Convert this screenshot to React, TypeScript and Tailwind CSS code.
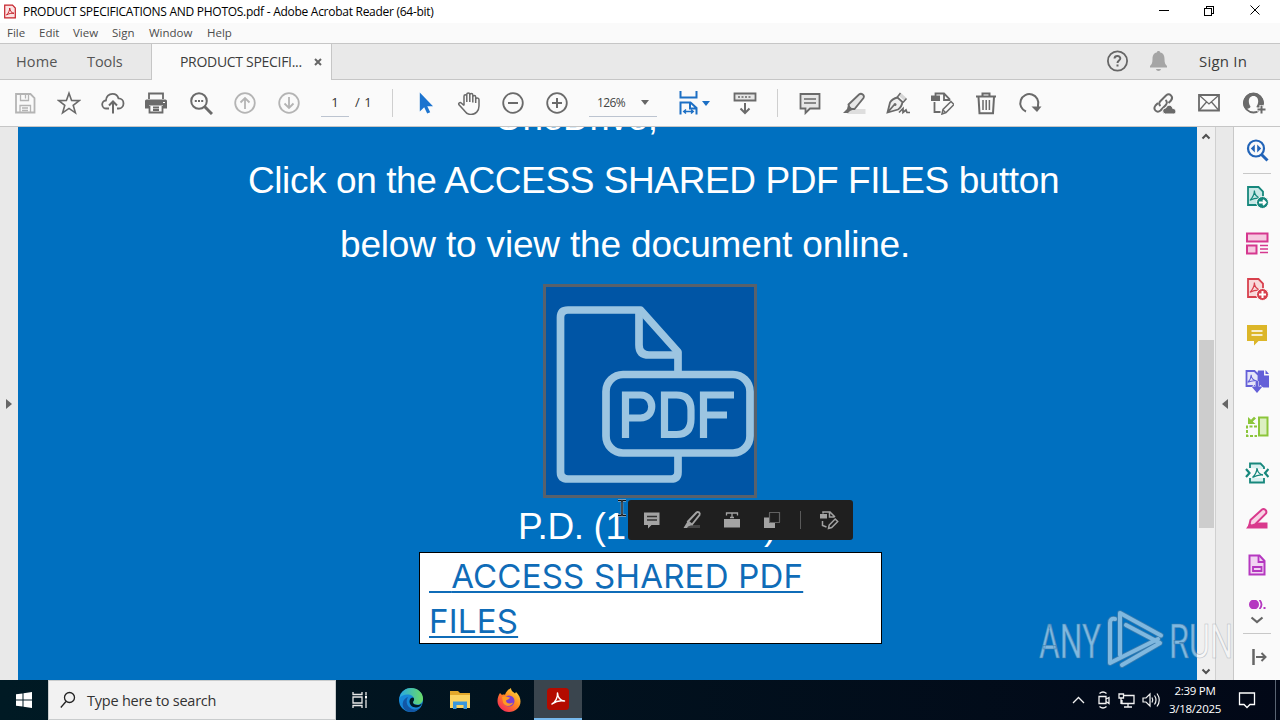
import type { ReactNode } from "react";
import clsx from "clsx";

type IconProps = {
  children: ReactNode;
  className?: string;
};

function Icon({ children, className }: IconProps) {
  return (
    <svg
      viewBox="0 0 24 24"
      fill="none"
      stroke="currentColor"
      strokeWidth="1.8"
      className={clsx("h-6 w-6 shrink-0", className)}
    >
      {children}
    </svg>
  );
}

function Cell({ children, className }: IconProps) {
  return (
    <div className={clsx("flex h-full shrink-0 items-center justify-center", className)}>
      {children}
    </div>
  );
}

const menuItems = [
  { label: "File", width: "w-8" },
  { label: "Edit", width: "w-[34px]" },
  { label: "View", width: "w-[39px]" },
  { label: "Sign", width: "w-[37px]" },
  { label: "Window", width: "w-[58px]" },
  { label: "Help", width: "w-10" },
];

const fileTools = [
  {
    name: "save",
    color: "text-[#b4b4b4]",
    icon: (
      <>
        <path d="M3 3h14.500L21.500 7v14.500H3z" />
        <path d="M7.500 3v6.500h8V3M12.500 4v3.500M7 21.500v-7h10.500v7M9 17h6M9 19.500h6" strokeWidth="1.300" />
      </>
    ),
  },
  {
    name: "star",
    color: "text-[#6a6a6a]",
    icon: <path d="M12 2.200l2.600 7.200 7.700.2-6.100 4.700 2.200 7.500-6.400-4.400-6.400 4.400 2.200-7.500L1.700 9.600l7.700-.2z" strokeWidth="1.600" />,
  },
  {
    name: "upload",
    color: "text-[#6a6a6a]",
    icon: (
      <>
        <path d="M8 17.500H5.500a4 4 0 0 1-.6-8C5 5.500 8 2.800 11.500 2.800c3.200 0 5.300 1.900 6 4.600 3 .1 5 2.400 5 5s-2 5-4.800 5.100H16" />
        <path d="M12 22.500V11M8 14.500l4-4 4 4" strokeWidth="2" />
      </>
    ),
  },
  {
    name: "print",
    color: "text-[#6a6a6a]",
    icon: (
      <>
        <path d="M1.500 8.500h19a1.500 1.500 0 0 1 1.500 1.500v7.500h-4v-3H4v3H0V10a1.500 1.500 0 0 1 1.500-1.500z" fill="currentColor" stroke="none" />
        <path d="M4 8V2.500h14V8M4.500 15v6.500h13V15M8 16.500h6M8 19h6" />
        <path d="M18 11.500h2" stroke="#fff" strokeWidth="1" />
      </>
    ),
  },
  {
    name: "find",
    color: "text-[#6a6a6a]",
    icon: (
      <>
        <circle cx="10" cy="10" r="7.800" strokeWidth="2" />
        <path d="M15.500 15.500l7.500 7.500" strokeWidth="3" />
        <path d="M5.800 10h2M9 10h2M12.200 10h2" strokeWidth="2" />
      </>
    ),
  },
  {
    name: "previous",
    color: "text-[#b4b4b4]",
    icon: (
      <>
        <circle cx="12" cy="12" r="9.800" />
        <path d="M12 18V7M7.500 11.500L12 7l4.500 4.500" />
      </>
    ),
  },
  {
    name: "next",
    color: "text-[#b4b4b4]",
    icon: (
      <>
        <circle cx="12" cy="12" r="9.800" />
        <path d="M12 6v11M7.500 12.500L12 17l4.500-4.500" />
      </>
    ),
  },
];

const viewTools = [
  {
    name: "select",
    color: "text-[#1c74cf]",
    icon: <path d="M6.800 1.500v19l4.400-4.200 3 6.200 3-1.300-2.900-6h5.700z" fill="currentColor" stroke="none" />,
  },
  {
    name: "hand",
    color: "text-[#6a6a6a]",
    icon: (
      <path
        d="M7 14.500V5.200c0-1.900 2.800-1.900 2.800 0V11M9.800 5V3.400c0-1.900 3-1.900 3 0V11M12.800 4c0-1.900 3-1.900 3 0v7.500M15.800 6c0-1.900 2.900-1.900 2.900 0v6M18.700 8.500c0-2 3.300-2 3.300.2V15c0 5-3.500 8.500-8 8.500-4 0-5.500-2-7.200-4.500L2 13.800c-1-1.800 1-3 2.500-1.600L7 14.500"
        strokeWidth="1.500"
      />
    ),
  },
  {
    name: "zoom out",
    color: "text-[#6a6a6a]",
    icon: (
      <>
        <circle cx="12" cy="12" r="9.800" />
        <path d="M7 12h10" strokeWidth="2" />
      </>
    ),
  },
  {
    name: "zoom in",
    color: "text-[#6a6a6a]",
    icon: (
      <>
        <circle cx="12" cy="12" r="9.800" />
        <path d="M7 12h10M12 7v10" strokeWidth="2" />
      </>
    ),
  },
];

const editTools = [
  {
    name: "comment",
    icon: (
      <>
        <path d="M2.500 3h19v14.500H12L7.500 22v-4.500h-5z" fill="#e6e6e6" />
        <path d="M6 8h12M6 12h12" strokeWidth="1.400" />
      </>
    ),
  },
  {
    name: "highlight",
    icon: (
      <>
        <path d="M8 18h15.500v5H5z" fill="#dedede" stroke="none" />
        <path d="M6.500 13.500L17 3.500c2.500-2 6 .8 4.500 3.500L12.500 18H8z" fill="#e6e6e6" />
        <path d="M6 14l5.500 4.500L8 20l-2 2H1l4-4z" fill="currentColor" stroke="none" />
      </>
    ),
  },
  {
    name: "sign",
    icon: (
      <>
        <path d="M12.500 4.500L15 2l5.500 5-2.500 2.500z" fill="#d6d6d6" stroke="none" />
        <path d="M1.500 21.500L4 11.500c2-3.500 5-4.500 7.500-5L16.500 11c-.5 3-1.500 5.500-4.500 7.500zM2 21l6-7" fill="#eee" />
        <path d="M11 6.500L14.500 2M17 11.500l3.500-4" strokeWidth="1.500" />
        <path d="M13 21.500l4-4v4l3-2.500 1 2.500H24" strokeWidth="1.700" />
        <circle cx="9" cy="13.500" r="1.500" fill="currentColor" stroke="none" />
      </>
    ),
  },
  {
    name: "fill",
    icon: (
      <>
        <path d="M5.500 5V2.500h8.500l5.500 5.500v2M14 3v6h5.500M4.500 11v10h6" />
        <path d="M1 4.500h9v5.500H1z" fill="currentColor" stroke="none" />
        <path d="M12 23l1-4.500 8-8 3 3-8 8z" fill="#fafafa" strokeWidth="1.500" />
        <path d="M13 19l2.800 2.800" strokeWidth="1.300" />
      </>
    ),
  },
  {
    name: "delete",
    icon: (
      <>
        <path d="M2 5.500h20M8.500 5V2.500h7V5M4.500 6l1 16.300h13.500l1-16.300" strokeWidth="2" />
        <path d="M9 9v10M12.200 9v10M15.400 9v10" strokeWidth="1.500" />
      </>
    ),
  },
  {
    name: "rotate",
    icon: (
      <>
        <path d="M8 20.500A9 9 0 1 1 20 14.500v2" strokeWidth="2" />
        <path d="M13.500 15.500H23.500L19 21z" fill="currentColor" stroke="none" />
      </>
    ),
  },
];

const shareTools = [
  {
    name: "link",
    icon: (
      <>
        <path d="M8.500 15c-2-1.500-1.500-3.500 0-5L14 4.500c3.500-3 8 1 5 5L16.500 12" strokeWidth="2" />
        <path d="M13.500 9c2 1.500 1.500 3.500.3 5L8.500 19.500c-3.500 3-8-1-5-5L6 12" strokeWidth="2" />
        <path d="M13.500 23a3 3 0 0 1 .3-6c1-3.500 6-4 7 .5 4 0 4 5.500.7 5.500z" fill="currentColor" stroke="#fafafa" strokeWidth="1" />
      </>
    ),
  },
  {
    name: "mail",
    icon: (
      <>
        <path d="M2 4h20v15.500H2z" />
        <path d="M2.500 4.500L12 13l9.500-8.500M2.500 19l7-8M21.500 19l-7-8" strokeWidth="1.300" />
      </>
    ),
  },
  {
    name: "account",
    icon: (
      <>
        <circle cx="11.500" cy="12" r="9.500" strokeWidth="1.800" />
        <path d="M3.500 18.500c3-1 5-1.200 5-3C5.500 11 6.500 5 11.500 5s6 6 3 10.500c0 1.200 1.200 1.500 2.500 2l5-4.500C22 7 17.500 2 11.500 2a10 10 0 0 0-8 16.500z" fill="currentColor" stroke="none" />
        <path d="M19.500 14v9M15 18.500h9" stroke="#fafafa" strokeWidth="4" />
        <path d="M19.500 14.500v8M15.500 18.500h8" strokeWidth="2" />
      </>
    ),
  },
];

const acrobatMark = "M6 17c3-3 5-7 5-11 0 5 3 8 8 9-5-1-9 0-13 2z";

const sideTools = [
  {
    name: "export",
    color: "text-[#16877c]",
    icon: (
      <>
        <path d="M3 2h10.500L18 6.500V20H3z" fill="#c9e8e6" />
        <path d={acrobatMark} strokeWidth="1.300" transform="translate(-.5 0) scale(.9)" />
        <circle cx="17.500" cy="17.500" r="6" fill="currentColor" stroke="#fafafa" strokeWidth="1" />
        <path d="M14 17.500h6.500M18 15l2.500 2.500L18 20" stroke="#fff" />
      </>
    ),
  },
  {
    name: "organize",
    color: "text-[#d5388f]",
    icon: (
      <>
        <path d="M2 2.500h20.500v8H2zM2 14.500h9.500v8H2z" fill="#f6c9e0" strokeWidth="2" />
        <path d="M15 14.500h8M15 18h8M15 21.500h8" strokeWidth="1.300" />
      </>
    ),
  },
  {
    name: "create",
    color: "text-[#d8404d]",
    icon: (
      <>
        <path d="M3 2h10.500L18 6.500V20H3z" fill="#f8d9da" />
        <path d={acrobatMark} strokeWidth="1.300" transform="translate(-.5 0) scale(.9)" />
        <circle cx="17.500" cy="17.500" r="6" fill="currentColor" stroke="#fafafa" strokeWidth="1" />
        <path d="M14 17.500h7M17.500 14v7" stroke="#fff" strokeWidth="2" />
      </>
    ),
  },
  {
    name: "note",
    color: "text-[#dcb628]",
    icon: (
      <>
        <path d="M2 2h20v16h-8.500L9 22.500V18H2z" fill="currentColor" stroke="none" />
        <path d="M6.500 8h11M6.500 12h11" stroke="#fff" strokeWidth="1.600" />
      </>
    ),
  },
  {
    name: "combine",
    color: "text-[#6460d8]",
    icon: (
      <>
        <path d="M13 1.500h6v5h5v12H12v-13z" fill="currentColor" stroke="none" />
        <path d="M20.500 1L24 5h-3.500z" fill="currentColor" stroke="none" />
        <path d="M1.500 2h8l4 4v11h-12z" fill="#e6e5f8" />
        <path d={acrobatMark} strokeWidth="1.500" transform="translate(-1.500 1.500) scale(.7)" />
        <path d="M12 12v9M7 17.500l5 5 5-5" stroke="#fafafa" strokeWidth="4" />
        <path d="M12 12v8" strokeWidth="3" />
        <path d="M6.500 17.500h11L12 24z" fill="currentColor" stroke="none" />
      </>
    ),
  },
  {
    name: "compare",
    color: "text-[#8bc53a]",
    icon: (
      <>
        <path d="M14 2.500h8.500v18H14z" fill="#dcefc2" strokeWidth="2" />
        <path d="M12 11.500H2v9.500h10" strokeDasharray="3 1.500" strokeWidth="2" />
        <path d="M3 2v7h7.500L7.800 6.500 11 3.500 9 1.800 6 4.800z" fill="currentColor" stroke="none" />
      </>
    ),
  },
  {
    name: "compress",
    color: "text-[#16877c]",
    icon: (
      <>
        <path d="M5 7V2.500h10.500L19 6v2M5 17v4.500h14V17" fill="#d9f1f0" />
        <path d="M1 8l3.500 4L1 16M23.500 8L20 12l3.500 4" strokeWidth="2.200" />
        <path d="M7.500 16.500c3-3 4.500-6 4.500-9.500.5 4 2.500 6.500 6 7-4-.5-7 .5-10.500 2.500z" strokeWidth="1.300" />
      </>
    ),
  },
  {
    name: "redact",
    color: "text-[#d93a8d]",
    icon: (
      <>
        <path d="M1 21.500l4-5 3.500 1 3.500-2h10.500v6z" fill="currentColor" stroke="none" />
        <path d="M5.500 13L17 2.500c2-1.500 5.500 1 4 4L10 17.500 4 19.500z" fill="#f8d4e6" strokeWidth="2" />
        <path d="M2 21h4.500l1-2.500-3-2.500z" fill="currentColor" stroke="none" />
      </>
    ),
  },
  {
    name: "prepare",
    color: "text-[#b538c0]",
    icon: (
      <>
        <path d="M4.500 2.500h10l5 5.500v13.500h-15z" fill="#f1d4f2" strokeWidth="2" />
        <path d="M13.500 3v6H19M8 14h8.500v4H8z" />
      </>
    ),
  },
];

const popupTools = [
  {
    name: "comment",
    icon: (
      <>
        <path d="M4 4.500h15.500V17h-8L8 20.500V17H4z" fill="currentColor" stroke="none" />
        <path d="M7 8.500h10M7 12h10" stroke="#333" strokeWidth="1.500" />
      </>
    ),
  },
  {
    name: "highlight",
    icon: (
      <>
        <path d="M8 17h12v3H5z" fill="#444" stroke="none" />
        <path d="M8 13.500l8.500-9c1.500-1.500 4 .3 3 2.500L12 16.500z" strokeWidth="1.900" />
        <path d="M7.500 13.500l4.500 3.500-4 1.500-1 1.500H3.500z" fill="currentColor" stroke="none" />
      </>
    ),
  },
  {
    name: "text",
    icon: (
      <>
        <path d="M4 11h16v8.500H4z" fill="currentColor" stroke="none" />
        <path d="M6.500 7.500V5h11v2.500M12 5v5M10 9.500h4" strokeWidth="1.300" />
      </>
    ),
  },
  {
    name: "snapshot",
    icon: (
      <>
        <path d="M4 9.500h5V15h6v5H4z" fill="currentColor" stroke="none" />
        <path d="M9.500 4.500h10v10h-10z" strokeWidth="1.200" strokeDasharray="1 1" />
      </>
    ),
  },
];

function TitleBar() {
  return (
    <header className="flex h-[23px] items-center bg-white pl-1 text-black">
      <svg viewBox="0 0 12 14" className="h-[15px] w-3" fill="none">
        <path d="M.7.700h7.800l2.800 2.800v9.800H.7z" fill="#fbe3e3" stroke="#c5222b" strokeWidth="1.200" />
        <path d="M2.500 10.500C4.500 8.500 5.700 6 5.700 3.500c.3 3 1.800 5 4.300 5.300-2.700-.3-5 .2-7.500 1.700z" stroke="#c5222b" />
      </svg>
      <h1 className="ml-[7px] text-[12px] leading-none tracking-[-0.275px] whitespace-nowrap">
        PRODUCT SPECIFICATIONS AND PHOTOS.pdf - Adobe Acrobat Reader (64-bit)
      </h1>
      <svg viewBox="0 0 112 12" className="mr-[14px] mb-0.5 ml-auto h-3 w-28" fill="none" stroke="#000" shapeRendering="crispEdges">
        <path d="M5 5.500h10M50.500 3.500h7v7h-7zM52.500 3V1.500h7v7H58" />
        <path d="M96.500.500l9 9M105.500.500l-9 9" shapeRendering="auto" />
      </svg>
    </header>
  );
}

function TabBar() {
  return (
    <nav className="flex h-[37px] items-stretch border-y border-[#c6c6c6] bg-[#e9e9e9] text-[14.500px] text-[#555]">
      <div className="flex w-[87px] items-center pl-4 tracking-[0.150px]">Home</div>
      <div className="flex w-16 items-center tracking-[-0.100px]">Tools</div>
      <div className="-mb-px flex w-[181px] items-center border-x border-[#c6c6c6] bg-[#fafafa] pb-px pl-7 text-[14px] text-[#3c3c3c]">
        <span className="w-[134px] tracking-[-0.300px] whitespace-nowrap">PRODUCT SPECIFI...</span>
        <svg viewBox="0 0 8 8" className="h-2 w-2" stroke="#666" strokeWidth="2">
          <path d="M1 1l6 6M7 1L1 7" />
        </svg>
      </div>
      <div className="ml-auto flex items-center pb-px">
        <Icon className="text-[#666]">
          <circle cx="11.500" cy="12" r="9.600" />
          <path d="M8.500 9.500c.3-3.500 6-3 5.800 0-.1 2-2.800 2-2.800 4.500M11.500 15.500v2" strokeWidth="2" />
        </Icon>
        <Icon className="ml-[17px] text-[#a5a5a5]">
          <path d="M11.500 2c1 0 1.700.6 1.700 1.600 3.300.7 4.300 3.400 4.300 6.400 0 4 .8 5.500 2.500 7v1.500H3V17c1.700-1.500 2.500-3 2.500-7 0-3 1-5.700 4.300-6.400C9.800 2.600 10.500 2 11.500 2zM9 20h5c-.3 2.500-4.700 2.500-5 0z" fill="currentColor" stroke="none" />
        </Icon>
        <span className="ml-7 w-[81px] text-[15px] tracking-[0.200px] text-[#3c3c3c]">Sign In</span>
      </div>
    </nav>
  );
}

function Toolbar() {
  return (
    <div className="flex h-[47px] items-center border-b border-[#c6c6c6] bg-[#fafafa] pl-[3px] text-[#6a6a6a]">
      {fileTools.map((tool) => (
        <Cell key={tool.name} className={clsx("w-11", tool.color)}>
          <Icon>{tool.icon}</Icon>
        </Cell>
      ))}
      <div className="ml-[10px] flex h-[27px] w-7 items-center justify-center border-b border-[#bcc4d0] text-[13px] text-[#333]">1</div>
      <span className="ml-[6px] w-[37px] text-[13px] tracking-[0.500px] text-[#333]">/ 1</span>
      <div className="mr-[10px] h-7 w-px bg-[#cfcfcf]" />
      {viewTools.map((tool) => (
        <Cell key={tool.name} className={clsx("w-11", tool.color)}>
          <Icon>{tool.icon}</Icon>
        </Cell>
      ))}
      <div className="mr-[10px] ml-[10px] flex h-[27px] w-[68px] items-center justify-between border-b border-[#bcc4d0] pr-2 pl-2 text-[12px] text-[#444]">
        <span className="tracking-[-0.600px]">126%</span>
        <svg viewBox="0 0 8 5" className="h-[5px] w-2" fill="#666">
          <path d="M0 0h8L4 5z" />
        </svg>
      </div>
      <div className="flex h-full w-14 items-center pl-[10px] text-[#1c6fc4]">
        <Icon>
          <path d="M3.500 0v6.500h16V0M3.500 23.500V11.500h10l6 5.500v6.500M13 12v5.500h6" strokeWidth="2" />
          <path d="M7 20.500h9M9 18.500l-2.300 2L9 22.500M14 18.500l2.300 2-2.300 2" strokeWidth="1.400" />
        </Icon>
        <svg viewBox="0 0 8 5" className="ml-px h-[5px] w-2 shrink-0" fill="currentColor">
          <path d="M0 0h8L4 5z" />
        </svg>
      </div>
      <Cell className="w-11">
        <Icon>
          <path d="M1.500 2.500h21v7h-21z" fill="#e6e6e6" />
          <path d="M5 6h14" strokeDasharray="2 1.500" strokeWidth="1.600" />
          <path d="M12 12v10M7.500 17.500L12 22l4.500-4.500" strokeWidth="2" />
        </Icon>
      </Cell>
      <div className="mx-[10px] h-7 w-px bg-[#cfcfcf]" />
      {editTools.map((tool) => (
        <Cell key={tool.name} className="w-11">
          <Icon>{tool.icon}</Icon>
        </Cell>
      ))}
      <div className="mr-1 ml-auto flex h-full">
        {shareTools.map((tool) => (
          <Cell key={tool.name} className="w-[45px]">
            <Icon>{tool.icon}</Icon>
          </Cell>
        ))}
      </div>
    </div>
  );
}

function PdfPicture() {
  return (
    <svg viewBox="0 0 208 208" className="h-full w-full" fill="none" stroke="#9cc5e1" strokeWidth="7.700">
      <path d="M132 84V65L94.500 23H22q-7.500 0-7.500 7.500V185q0 7 7.500 7h103q7 0 7-7v-19" strokeLinejoin="round" />
      <path d="M93 23v35q0 10 10 10h29" />
      <rect x="60" y="87.500" width="144" height="78.500" rx="17" />
      <path d="M79.500 151v-43h15c15 0 15 23 0 23h-15M118.500 108h12q14.500 0 14.500 15v9q0 15.500-14.500 15.500h-12zM157.500 151v-43H188M157.500 128h23.500" strokeWidth="7.200" />
    </svg>
  );
}

function SelectionPopup() {
  return (
    <div className="absolute top-[373px] left-[610px] flex h-10 w-[225px] items-center rounded-[3px] bg-[#1f1f1f] pl-1 text-[#a3a3a3]">
      {popupTools.map((tool) => (
        <div key={tool.name} className="flex w-10 justify-center">
          <Icon>{tool.icon}</Icon>
        </div>
      ))}
      <div className="ml-2 h-[18px] w-px bg-[#5a5a5a]" />
      <Icon className="ml-4">
        <path d="M6 5.500V4h7l5 5M12.500 4v5h5M5.500 13v4.500l4 1.500" strokeWidth="1.500" />
        <path d="M3 6h7v4.500H3z" fill="currentColor" stroke="none" />
        <path d="M11.500 20.500l.7-3.500 6-6 2.500 2.500-6 6z" strokeWidth="1.500" />
      </Icon>
    </div>
  );
}

function Document() {
  return (
    <main className="relative w-[1179px] overflow-hidden bg-[#0070c0] text-white">
      <div className="-mt-[41px] font-['Liberation_Sans'] text-[37px] whitespace-nowrap">
        <p className="pl-[476px] leading-[63px] tracking-[-0.300px]">OneDrive,</p>
        <p className="pl-[230px] leading-[64px] tracking-[-0.410px]">Click on the ACCESS SHARED PDF FILES button</p>
        <p className="pl-[322px] leading-[64px] tracking-[-0.170px]">below to view the document online.</p>
      </div>
      <div className="mt-[7px] ml-[525px] h-[214px] w-[214px] border-[3px] border-[#59616b] bg-[#0055a5]">
        <PdfPicture />
      </div>
      <div className="flex h-[54px] items-center pt-0.5 pl-[500px] font-['Liberation_Sans'] text-[37px] leading-none whitespace-nowrap">
        <span className="w-[246px] tracking-[-0.400px]">P.D. (1</span>
        <span>)</span>
      </div>
      <div className="ml-[401px] h-[92px] w-[463px] border border-black bg-white pt-px pl-[9px] font-['Inter'] text-[33px] leading-[45px] text-[#0f6cb8]">
        <p className="tracking-[0.220px] whitespace-pre underline decoration-2 underline-offset-[3px]">
          <span className="tracking-[-1.900px]">{"   "}</span>
          ACCESS SHARED PDF
        </p>
        <p className="tracking-[0.220px] underline decoration-2 underline-offset-[3px]">FILES</p>
      </div>
      <SelectionPopup />
      <svg viewBox="0 0 10 18" className="absolute top-[372px] left-[599px] h-[18px] w-[10px]" fill="none">
        <path d="M1 1.500h3l1 1 1-1h3M5 2v14M1 16.500h3l1-1 1 1h3" stroke="#9ab" strokeWidth="2.500" />
        <path d="M1 1.500h3l1 1 1-1h3M5 2v14M1 16.500h3l1-1 1 1h3" stroke="#111" strokeWidth="1.200" />
      </svg>
    </main>
  );
}

function ScrollBar() {
  return (
    <div className="flex w-[19px] flex-col items-center border-r border-[#d0d0d0] bg-[#f0f0f0]">
      <svg viewBox="0 0 10 18" className="h-[18px] w-[10px]" fill="none" stroke="#505050" strokeWidth="2">
        <path d="M1.500 11.500L5 8l3.500 3.500" />
      </svg>
      <div className="mt-[195px] h-[188px] w-[15px] bg-[#cdcdcd]" />
      <svg viewBox="0 0 10 18" className="mt-auto h-[18px] w-[10px]" fill="none" stroke="#505050" strokeWidth="2">
        <path d="M1.500 7.500L5 11l3.500-3.500" />
      </svg>
    </div>
  );
}

function SidePanel() {
  return (
    <aside className="flex w-[46px] flex-col items-center bg-[#fafafa]">
      <div className="flex h-[46px] items-center text-[#2264b8]">
        <Icon>
          <circle cx="11" cy="10.500" r="8" strokeWidth="2.200" />
          <path d="M16.500 16.500l6 6" strokeWidth="3" />
          <path d="M9.800 6.500v8l-4-4zM12.200 6.500v8l4-4z" fill="currentColor" stroke="none" />
        </Icon>
      </div>
      <div className="h-px w-7 bg-[#c8c8c8]" />
      {sideTools.map((tool) => (
        <div key={tool.name} className={clsx("flex h-[46px] items-center", tool.color)}>
          <Icon>{tool.icon}</Icon>
        </div>
      ))}
      <div className="mt-3 h-[9px] overflow-hidden text-[#b538c0]">
        <svg viewBox="0 0 20 9" className="h-[9px] w-5" fill="none" stroke="currentColor" strokeWidth="1.800">
          <circle cx="7" cy="4.500" r="5" fill="currentColor" stroke="none" />
          <path d="M12.500 0q4 4.500 0 9M16.500 8h2" />
        </svg>
      </div>
      <svg viewBox="0 0 14 8" className="mt-[7px] h-2 w-[14px]" fill="none" stroke="#666" strokeWidth="2.200">
        <path d="M1.500 1.500L7 6l5.500-4.500" />
      </svg>
      <div className="mt-[9px] h-px w-7 bg-[#c8c8c8]" />
      <Icon className="mt-[11px] ml-[3px] text-[#666]">
        <path d="M6.500 4v16" strokeWidth="2.500" />
        <path d="M9 12h9M14.500 8l4 4-4 4" strokeWidth="2" />
      </Icon>
    </aside>
  );
}

function Watermark() {
  return (
    <svg viewBox="0 0 200 64" className="absolute top-[608px] left-[1036px] h-16 w-[200px]" opacity="0.500">
      <g fill="#fff" stroke="#7d8c9a" strokeWidth=".7" fontFamily="Roboto" fontSize="48">
        <text x="3" y="50" textLength="62" lengthAdjust="spacingAndGlyphs">ANY</text>
        <text x="133" y="50" textLength="64" lengthAdjust="spacingAndGlyphs">RUN</text>
      </g>
      <g fill="none" strokeLinejoin="round" strokeLinecap="round">
        <path d="M79 11q-5-1-5 4v40l48-24M84 47V5l41 22.500M90 17l34 18-38 22" stroke="#75899c" strokeWidth="5.500" />
        <path d="M79 11q-5-1-5 4v40l48-24M84 47V5l41 22.500M90 17l34 18-38 22" stroke="#fff" strokeWidth="4" />
      </g>
    </svg>
  );
}

function Taskbar() {
  return (
    <footer className="flex h-10 items-stretch bg-linear-to-r from-[#001a24] to-[#020817] font-['Open_Sans'] text-white">
      <div className="flex w-12 items-center justify-center">
        <svg viewBox="0 0 16 16" className="h-4 w-4" fill="#fff">
          <path d="M0 2.300l6.500-.9v6.100H0zM7.500 1.200L16 0v7.500H7.500zM0 8.500h6.500v6.100L0 13.700zM7.500 8.500H16V16l-8.500-1.200z" />
        </svg>
      </div>
      <div className="flex w-72 items-center border border-[#c9cccd] bg-[#f2f2f2] pl-[11px] text-[#333]">
        <svg viewBox="0 0 16 18" className="h-[18px] w-4" fill="none" stroke="#222" strokeWidth="1.300">
          <circle cx="9.500" cy="6.500" r="5" />
          <path d="M6 10.500L.8 16.500" />
        </svg>
        <span className="mt-px ml-[11px] text-[14.500px] tracking-[-0.220px]">Type here to search</span>
      </div>
      <div className="flex w-12 items-center justify-center">
        <svg viewBox="0 0 18 18" className="h-[18px] w-[18px]" fill="none" stroke="#e8e8e8" strokeWidth="1.300">
          <path d="M2 1v2.500h9V1M2 6h9v6H2zM2 17v-2.500h9V17M15 1v3.500M15 8.500V17" />
          <path d="M14 5h2v2.500h-2z" fill="#fff" stroke="none" />
        </svg>
      </div>
      <div className="flex w-[54px] items-center justify-center">
        <svg viewBox="0 0 24 24" className="h-6 w-6">
          <defs>
            <linearGradient id="edge-top" x1="0" x2="1">
              <stop offset="0" stopColor="#27a8e4" />
              <stop offset="1" stopColor="#6bdc66" />
            </linearGradient>
          </defs>
          <circle cx="12" cy="12" r="12" fill="#1688d8" />
          <path d="M.5 10C2 3 7 0 12 0c7 0 12 5 12 10.500 0 4-3 6-6 6-2.500 0-4-1-4-2s1-1.500 1-3.500C15 8.500 12 6.500 8.500 6.500 5 6.500 2 8 .5 10z" fill="url(#edge-top)" />
          <path d="M9 9c-3 5-1 11 6 12.500 3 .5 5-1 7-3C20 22 16 24 12 24 6 24 2.500 18.500 4 14c.8-2.500 2.500-4 5-5z" fill="#1257a5" />
          <path d="M14 14.500c0 1.500 2 2.500 4.500 2.500 2 0 3.500-.8 4.500-1.800-1 3-3.500 4.300-6 4.300-4 0-6.500-3-6.500-6 0-2.500 1.500-4 3.500-4 1 .5 1.300 1.500 1 2.500s-1 1.500-1 2.500z" fill="#001a24" />
        </svg>
      </div>
      <div className="flex w-11 items-center justify-center">
        <svg viewBox="0 0 22 20" className="h-5 w-[22px]">
          <path d="M1 1h8l2 2h10v15H1z" fill="#e3a82b" />
          <path d="M1 5h20v13H1z" fill="#fcd462" />
          <path d="M4 19v-7.500h14V19h-3.500v-4h-7v4z" fill="#3a97dc" />
        </svg>
      </div>
      <div className="flex w-[52px] items-center justify-center pl-0.5">
        <svg viewBox="0 0 24 24" className="h-6 w-6">
          <defs>
            <linearGradient id="fox" x1="1" x2=".2" y1="0" y2="1">
              <stop offset="0" stopColor="#fff04a" />
              <stop offset=".5" stopColor="#ff8a1f" />
              <stop offset="1" stopColor="#f5245b" />
            </linearGradient>
          </defs>
          <path d="M3 5l2 2c1-.5 2-.5 3-.2C9 3.500 12 1 14 0c0 3 2 3.500 4 5.500L19 4c3 3 4.500 6 4.500 9.500C23.500 19.500 18 24 12 24S.5 19 .5 13C.5 10 1.500 7 3 5z" fill="url(#fox)" />
          <circle cx="12" cy="13" r="5.500" fill="#7b3fd0" />
          <path d="M5 9c3-2 5 0 8 .5-1 2-3 2-4 3 0 3 4 4 7 2-1 4-8 5-10 0z" fill="#ff9a22" />
        </svg>
      </div>
      <div className="flex w-12 items-center justify-center border-b-2 border-[#76b9ed] bg-[#3a454e]">
        <svg viewBox="0 0 22 22" className="mr-px h-[22px] w-[22px]" fill="none">
          <rect width="22" height="22" rx="3.500" fill="#b30b00" />
          <path d="M5 16c3.500-2 6-7 5.500-11 0 4 3 8 7 8-5-1-9 .5-12.500 3z" stroke="#fff" strokeWidth="1.500" strokeLinejoin="round" />
        </svg>
      </div>
      <div className="ml-auto flex items-center">
        <svg viewBox="0 0 92 22" className="h-[22px] w-[92px]" fill="none" stroke="#f2f2f2" strokeWidth="1.300">
          <path d="M2 14l5.500-5.500L13 14" />
          <path d="M28 7.500h7v7h-7zM35 10l3-1.500v6L35 12.500M28.500 4.500q3.500-3 7 0M28.500 17.500q3.500 3 7 0" />
          <path d="M52.500 6.500H63v8H51V11M57 14.500V18M53 18h8M48 5h4.500v4H48zM50 9v6" />
          <path d="M72 9h3l4-4v12l-4-4h-3zM81 8.500q1.500 2.500 0 5M83.500 6.500q3 4.500 0 9M86 4.500q4.500 6.500 0 13" strokeWidth="1.200" />
        </svg>
        <div className="ml-0.5 w-[60px] text-center text-[11.500px] leading-[18px] tracking-[-0.250px] whitespace-nowrap">
          <p>2:39 PM</p>
          <p>3/18/2025</p>
        </div>
        <svg viewBox="0 0 18 18" className="mr-[19px] ml-[13px] h-[18px] w-[18px]" fill="none" stroke="#fff" strokeWidth="1.300">
          <path d="M1.500 2h15v11.500h-4.500l-3 3-3-3h-4.500z" />
        </svg>
        <div className="mr-1 h-10 w-px bg-[#5a6472]" />
      </div>
    </footer>
  );
}

export default function App() {
  return (
    <div className="relative flex h-[720px] w-[1280px] flex-col overflow-hidden bg-[#fafafa] font-['Open_Sans',sans-serif]">
      <TitleBar />
      <div className="flex h-5 items-center bg-[#fafafa] pl-[7px] text-[11.500px] text-[#4c4c4c]">
        {menuItems.map((item) => (
          <span key={item.label} className={item.width}>
            {item.label}
          </span>
        ))}
      </div>
      <TabBar />
      <Toolbar />
      <div className="flex h-[553px]">
        <div className="flex w-[18px] items-center justify-center bg-[#e9e9e9]">
          <svg viewBox="0 0 6 10" className="h-[10px] w-[6px]" fill="#666">
            <path d="M0 0v10l6-5z" />
          </svg>
        </div>
        <Document />
        <ScrollBar />
        <div className="flex w-[18px] items-center justify-center border-r border-[#c8c8c8] bg-[#e9e9e9]">
          <svg viewBox="0 0 6 10" className="h-[10px] w-[6px]" fill="#666">
            <path d="M6 0v10L0 5z" />
          </svg>
        </div>
        <SidePanel />
      </div>
      <Taskbar />
      <Watermark />
    </div>
  );
}
